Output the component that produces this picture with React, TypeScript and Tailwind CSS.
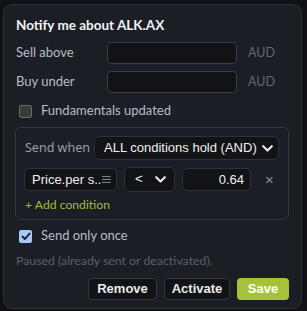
import React from "react";

function Chevron() {
  return (
    <svg width="11" height="7" viewBox="0 0 11 7" className="shrink-0">
      <path d="M1.2 1.2 L5.5 5.5 L9.8 1.2" fill="none" stroke="#e6e6e6" strokeWidth="2.2" strokeLinecap="round" strokeLinejoin="round" />
    </svg>
  );
}

export default function App() {
  const sans = { fontFamily: '"Noto Sans", "Open Sans", sans-serif' } as React.CSSProperties;
  const lato = { fontFamily: 'Lato, "Noto Sans", sans-serif' } as React.CSSProperties;
  const arial = { fontFamily: '"Liberation Sans", Arial, sans-serif' } as React.CSSProperties;
  return (
    <div className="w-[307px] h-[311px] bg-[#0f1115] pt-[4px] pl-[3px] overflow-hidden" style={sans}>
      <div className="w-[299px] h-[305px] rounded-[9px] border border-[#2c3038] bg-[#1b1e25] px-[11px] flex flex-col">
        <div className="pt-[11px] pl-px leading-[18px] text-[13.5px] font-bold text-[#f2f2f2] whitespace-nowrap" style={lato}>Notify me about ALK.AX</div>

        <div className="mt-[8px] flex items-center h-[22px]">
          <span className="pl-px w-[92px] text-[13px] text-[#b8bcc5]" style={lato}>Sell above</span>
          <div className="w-[130px] h-[22px] rounded-[4px] border border-[#3a3e47] bg-[#111317]" />
          <span className="ml-[11px] text-[12.5px] text-[#626771]" style={lato}>AUD</span>
        </div>
        <div className="mt-[7px] flex items-center h-[22px]">
          <span className="pl-px w-[92px] text-[13px] text-[#b8bcc5]" style={lato}>Buy under</span>
          <div className="w-[130px] h-[22px] rounded-[4px] border border-[#3a3e47] bg-[#111317]" />
          <span className="ml-[11px] text-[12.5px] text-[#626771]" style={lato}>AUD</span>
        </div>

        <div className="mt-[9px] flex items-center h-[18px] pl-[4px]">
          <div className="w-[13px] h-[13px] rounded-[2px] border border-[#6a6a6a] bg-[#3b3b3b]" />
          <span className="ml-[9px] text-[13px] text-[#b8bcc6]" style={lato}>Fundamentals updated</span>
        </div>

        <div className="mt-[7px] w-[274px] rounded-[6px] border border-[#343842] pt-[8px] pb-[6px] pl-[8px] pr-[8px] flex flex-col">
          <div className="flex items-center h-[24px]">
            <span className="pl-px w-[70px] shrink-0 text-[12.5px] text-[#9a9ea8]">Send when</span>
            <div className="w-[185px] h-[24px] rounded-[5px] border border-[#2e323a] bg-[#111317] flex items-center justify-between pl-[9px] pr-[5px]" style={arial}>
              <span className="text-[13px] text-[#f0f0f0] whitespace-nowrap">ALL conditions hold (AND)</span>
              <Chevron />
            </div>
          </div>
          <div className="mt-[7px] flex items-center h-[25px]">
            <div className="w-[93px] h-[23px] rounded-[5px] border border-[#2e323a] bg-[#111317] flex items-center pl-[7px] pr-[5px]" style={arial}>
              <span className="text-[13px] text-[#f0f0f0] whitespace-nowrap">Price.per s..</span>
              <svg width="9" height="9" viewBox="0 0 9 9" className="ml-[1px]">
                <path d="M0 1.5 H9 M0 4.5 H9 M0 7.5 H9" stroke="#8a8e96" strokeWidth="1" />
              </svg>
            </div>
            <div className="ml-[7px] w-[51px] h-[25px] rounded-[5px] border border-[#2e323a] bg-[#111317] flex items-center justify-between pl-[10px] pr-[8px]" style={arial}>
              <span className="text-[13.5px] text-[#f0f0f0]">&lt;</span>
              <Chevron />
            </div>
            <div className="ml-[7px] w-[69px] h-[23px] rounded-[5px] border border-[#2e323a] bg-[#111317] flex items-center justify-end pr-[6px]" style={arial}>
              <span className="text-[13px] text-[#f0f0f0]">0.64</span>
            </div>
            <span className="ml-[14px] text-[15px] leading-none text-[#8c9099]" style={arial}>×</span>
          </div>
          <div className="mt-[5px] pl-px leading-[16px] text-[12.2px] text-[#9fbd35]" style={lato}>+ Add condition</div>
        </div>

        <div className="mt-[7px] flex items-center h-[18px] pl-[4px]">
          <div className="w-[13px] h-[13px] rounded-[2px] bg-[#a8c7fa] flex items-center justify-center">
            <svg width="10" height="9" viewBox="0 0 10 9">
              <path d="M1.5 4.6 L3.9 7 L8.6 1.6" fill="none" stroke="#1b1e25" strokeWidth="1.9" strokeLinecap="round" strokeLinejoin="round" />
            </svg>
          </div>
          <span className="ml-[9px] text-[13px] text-[#b8bcc6]" style={lato}>Send only once</span>
        </div>

        <div className="mt-[9px] pl-px leading-[14px] text-[12.3px] text-[#5c6068] whitespace-nowrap" style={lato}>Paused (already sent or deactivated).</div>

        <div className="mt-[10px] flex justify-end gap-[7px] pr-[1px]" style={arial}>
          <div className="w-[69px] h-[22px] rounded-[4px] border border-[#33373f] bg-[#111317] flex items-center justify-center text-[13px] font-bold text-[#ececec]">Remove</div>
          <div className="w-[66px] h-[22px] rounded-[4px] border border-[#33373f] bg-[#111317] flex items-center justify-center text-[13px] font-bold text-[#ececec]">Activate</div>
          <div className="w-[52px] h-[22px] rounded-[4px] bg-[#a5c33a] flex items-center justify-center text-[13px] font-bold text-[#ffffff]">Save</div>
        </div>
      </div>
    </div>
  );
}
